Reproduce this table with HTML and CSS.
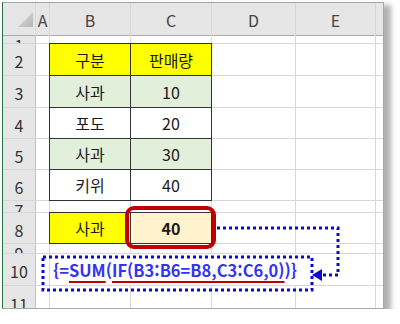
FILE: index.html
```html
<!DOCTYPE html>
<html lang="ko">
<head>
    <meta charset="UTF-8">
    <meta name="viewport" content="width=device-width, initial-scale=1.0">
    <title>배열 수식 - SUM(IF)</title>
    <link rel="stylesheet" href="styles.css">
</head>
<body>

    <div class="window">
        <div class="sheet">
            <!-- 열 머리글 -->
            <div class="corner"><span class="tri"></span></div>
            <div class="colhead">A</div>
            <div class="colhead">B</div>
            <div class="colhead">C</div>
            <div class="colhead">D</div>
            <div class="colhead">E</div>
            <div class="colhead"></div>

            <!-- 1행 -->
            <div class="rowhead short">1</div>
            <div class="cell"></div><div class="cell"></div><div class="cell"></div>
            <div class="cell"></div><div class="cell"></div><div class="cell"></div>

            <!-- 2행: 표 머리글 -->
            <div class="rowhead">2</div>
            <div class="cell"></div>
            <div class="cell tb yellow">구분</div>
            <div class="cell tb yellow">판매량</div>
            <div class="cell"></div><div class="cell"></div><div class="cell"></div>

            <div class="rowhead">3</div>
            <div class="cell"></div>
            <div class="cell tb green">사과</div>
            <div class="cell tb green">10</div>
            <div class="cell"></div><div class="cell"></div><div class="cell"></div>

            <div class="rowhead">4</div>
            <div class="cell"></div>
            <div class="cell tb">포도</div>
            <div class="cell tb">20</div>
            <div class="cell"></div><div class="cell"></div><div class="cell"></div>

            <div class="rowhead">5</div>
            <div class="cell"></div>
            <div class="cell tb green">사과</div>
            <div class="cell tb green">30</div>
            <div class="cell"></div><div class="cell"></div><div class="cell"></div>

            <div class="rowhead">6</div>
            <div class="cell"></div>
            <div class="cell tb">키위</div>
            <div class="cell tb">40</div>
            <div class="cell"></div><div class="cell"></div><div class="cell"></div>

            <div class="rowhead short">7</div>
            <div class="cell"></div><div class="cell"></div><div class="cell"></div>
            <div class="cell"></div><div class="cell"></div><div class="cell"></div>

            <!-- 8행: 조건과 결과 -->
            <div class="rowhead">8</div>
            <div class="cell"></div>
            <div class="cell tb yellow">사과</div>
            <div class="cell tb cream result">40</div>
            <div class="cell"></div><div class="cell"></div><div class="cell"></div>

            <div class="rowhead short">9</div>
            <div class="cell"></div><div class="cell"></div><div class="cell"></div>
            <div class="cell"></div><div class="cell"></div><div class="cell"></div>

            <!-- 10행: 수식 -->
            <div class="rowhead">10</div>
            <div class="cell"></div>
            <div class="cell formula">{=<span class="ul">SUM</span>(<span class="ul">IF(B3:B6=B8,C3:C6,0)</span>)}</div>
            <div class="cell"></div>

            <div class="rowhead">11</div>
            <div class="cell"></div><div class="cell"></div><div class="cell"></div>
            <div class="cell"></div><div class="cell"></div><div class="cell"></div>
        </div>

        <!-- 강조 표시 -->
        <svg class="marks" width="380" height="305" viewBox="0 0 380 305">
            <rect x="124" y="205" width="87" height="39" rx="7" fill="none" stroke="#c00000" stroke-width="4"/>
            <rect x="40" y="254" width="269" height="33" fill="none" stroke="#0b0bd0" stroke-width="3" stroke-dasharray="3 3"/>
            <polyline points="214,225 335,225 335,272 319,272" fill="none" stroke="#0b0bd0" stroke-width="3" stroke-dasharray="3 3"/>
            <polygon points="309,272 319,266 319,278" fill="#0b0bd0"/>
        </svg>
    </div>

</body>
</html>
```

FILE: styles.css
```css
body {
    margin: 0;
    padding: 2px 0 0 2px;
    background: #fff;
    font-family: 'Noto Sans CJK KR', 'Noto Sans', sans-serif;
}

.window {
    position: relative;
    width: 380px;
    height: 305px;
    border: 1px solid #a6a6a6;
    border-left-color: #217346;
    box-shadow: 5px 5px 5px 2px rgba(0, 0, 0, 0.3);
    overflow: hidden;
}

.sheet {
    display: grid;
    grid-template-columns: 32px 13px 80px 80px 83px 79px 80px;
    grid-template-rows: 32px 7px 31px 31px 30px 30px 30px 11px 30px 9px 31px 32px;
    gap: 1px;
    width: max-content;
    background: #d8d8d8;
    font-size: 16px;
    line-height: 16px;
}

.corner {
    display: flex;
    justify-content: flex-end;
    align-items: flex-end;
    padding: 0 2px 8px 0;
    background: #e6e6e6;
    box-shadow: 0 1px 0 #ababab;
}

.corner .tri {
    width: 15px;
    height: 15px;
    background: linear-gradient(135deg, #e0e0e0, #b4b4b4);
    clip-path: polygon(100% 0, 100% 100%, 0 100%);
}

.colhead {
    display: flex;
    justify-content: center;
    align-items: flex-end;
    padding-bottom: 7px;
    background: #e6e6e6;
    color: #444;
    box-shadow: 0 1px 0 #ababab;
}

.rowhead {
    display: flex;
    justify-content: center;
    align-items: center;
    padding-top: 3px;
    background: #e6e6e6;
    color: #333;
    overflow: hidden;
    box-shadow: 1px 0 0 #c2c2c2;
}

.rowhead.short {
    align-items: flex-start;
    padding-top: 1px;
}

.cell {
    display: flex;
    justify-content: center;
    align-items: center;
    background: #fff;
    color: #1a1a1a;
}

.cell.tb {
    box-shadow: 0 0 0 1px #333;
}

.yellow {
    background: #ffff00;
}

.green {
    background: #e2efda;
}

.cream {
    background: #fff2cc;
}

.result {
    font-weight: bold;
}

.formula {
    grid-column: span 4;
    justify-content: flex-start;
    padding-left: 3px;
    color: #3434f2;
    font-size: 16.5px;
    font-weight: bold;
    white-space: nowrap;
}

.formula .ul {
    text-decoration: underline;
    text-decoration-color: #c00000;
    text-decoration-thickness: 2px;
    text-underline-offset: 4px;
}

.marks {
    position: absolute;
    left: 0;
    top: 0;
    pointer-events: none;
}
```
